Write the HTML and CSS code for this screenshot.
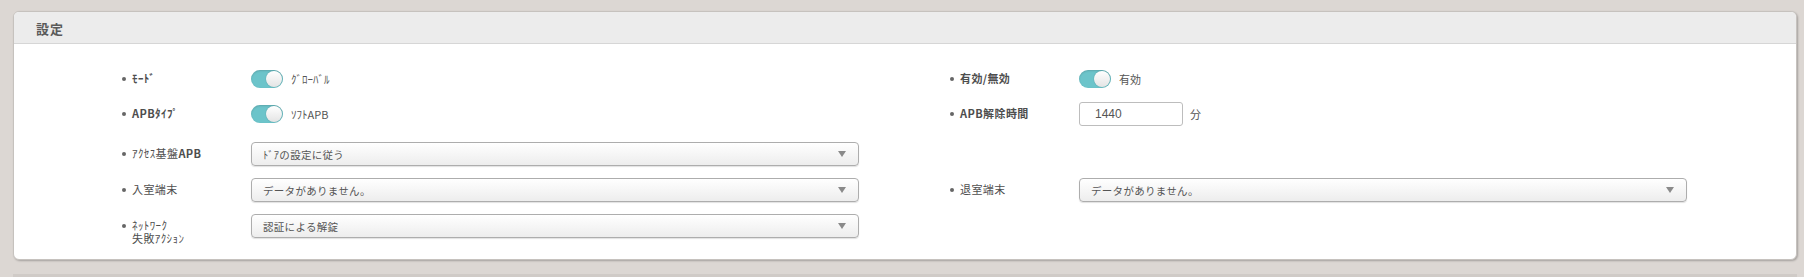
FILE: index.html
```html
<!DOCTYPE html>
<html lang="ja">
<head>
    <meta charset="UTF-8">
    <meta name="viewport" content="width=device-width, initial-scale=1.0">
    <title>設定</title>
    <link rel="stylesheet" href="styles.css">
</head>
<body>
    <div class="panel">
        <div class="panel-header">
            <h3 class="panel-title">設定</h3>
        </div>
        <div class="panel-body">
            <div class="form-row row-first">
                <div class="field">
                    <div class="field-label bold">ﾓｰﾄﾞ</div>
                    <div class="field-value">
                        <span class="toggle on"><span class="knob"></span></span>
                        <span class="toggle-text">ｸﾞﾛｰﾊﾞﾙ</span>
                    </div>
                </div>
                <div class="field">
                    <div class="field-label bold">有効/無効</div>
                    <div class="field-value">
                        <span class="toggle on"><span class="knob"></span></span>
                        <span class="toggle-text">有効</span>
                    </div>
                </div>
            </div>
            <div class="form-row row-second">
                <div class="field">
                    <div class="field-label bold">APBﾀｲﾌﾟ</div>
                    <div class="field-value">
                        <span class="toggle on"><span class="knob"></span></span>
                        <span class="toggle-text">ｿﾌﾄAPB</span>
                    </div>
                </div>
                <div class="field">
                    <div class="field-label bold">APB解除時間</div>
                    <div class="field-value">
                        <input type="text" class="text-input" value="1440">
                        <span class="unit">分</span>
                    </div>
                </div>
            </div>
            <div class="form-row">
                <div class="field">
                    <div class="field-label"><span>ｱｸｾｽ基盤<b>APB</b></span></div>
                    <div class="field-value">
                        <div class="select"><span class="select-text">ﾄﾞｱの設定に従う</span><span class="caret"></span></div>
                    </div>
                </div>
                <div class="field"></div>
            </div>
            <div class="form-row">
                <div class="field">
                    <div class="field-label">入室端末</div>
                    <div class="field-value">
                        <div class="select"><span class="select-text">データがありません。</span><span class="caret"></span></div>
                    </div>
                </div>
                <div class="field">
                    <div class="field-label">退室端末</div>
                    <div class="field-value">
                        <div class="select"><span class="select-text">データがありません。</span><span class="caret"></span></div>
                    </div>
                </div>
            </div>
            <div class="form-row row-last">
                <div class="field">
                    <div class="field-label">ﾈｯﾄﾜｰｸ<br>失敗ｱｸｼｮﾝ</div>
                    <div class="field-value">
                        <div class="select"><span class="select-text">認証による解錠</span><span class="caret"></span></div>
                    </div>
                </div>
                <div class="field"></div>
            </div>
        </div>
    </div>
    <div class="panel-next"></div>
</body>
</html>
```

FILE: styles.css
```css
body {
    margin: 0;
    padding: 11px 7px 0 13px;
    background: #dcd7d3;
    font-family: "Noto Sans CJK JP", "Liberation Sans", sans-serif;
    color: #555;
    overflow: hidden;
}
.panel {
    background: #fff;
    border: 1px solid #c6c2be;
    border-radius: 6px;
    box-shadow: 1px 1px 2px rgba(0, 0, 0, 0.25);
    overflow: hidden;
}
.panel-header {
    height: 31px;
    background: #ececec;
    border-bottom: 1px solid #d6d6d6;
    padding-left: 22px;
}
.panel-title {
    margin: 0;
    font-size: 13px;
    font-weight: bold;
    letter-spacing: 1px;
    line-height: 33px;
    color: #5a5a5a;
}
.panel-body {
    padding: 23px 0 21px 108px;
}
.form-row {
    display: grid;
    grid-template-columns: 828px 1fr;
    height: 24px;
    margin-bottom: 12px;
}
.row-first {
    margin-bottom: 11px;
}
.row-second {
    margin-bottom: 16px;
}
.row-last {
    margin-bottom: 0;
}
.field {
    display: flex;
}
.field-label {
    flex: none;
    width: 129px;
    box-sizing: border-box;
    padding: 5px 0 0 10px;
    position: relative;
    font-size: 11px;
    line-height: 13px;
    letter-spacing: 0.4px;
    color: #4e4e4e;
    white-space: nowrap;
}
.field-label::before {
    content: "";
    position: absolute;
    left: 0;
    top: 10px;
    width: 4px;
    height: 4px;
    border-radius: 50%;
    background: #666;
}
.field-label b,
.field-label.bold {
    font-weight: bold;
}
.field-value {
    display: flex;
    align-items: center;
    height: 24px;
}
.toggle {
    position: relative;
    display: inline-block;
    width: 32px;
    height: 18px;
    border-radius: 9px;
    background: #6cc4ca;
    box-shadow: inset 0 1px 2px rgba(0, 0, 0, 0.15);
}
.toggle .knob {
    position: absolute;
    top: 1px;
    right: 1px;
    width: 16px;
    height: 16px;
    border-radius: 50%;
    background: linear-gradient(to bottom, #ffffff, #e4e4e4);
    box-shadow: 0 0 1px rgba(0, 0, 0, 0.4);
}
.toggle-text {
    margin-left: 8px;
    font-size: 11px;
    color: #555;
}
.text-input {
    box-sizing: border-box;
    width: 104px;
    height: 24px;
    padding: 0 0 0 15px;
    border: 1px solid #bdbdbd;
    border-radius: 3px;
    font-family: "Liberation Sans", sans-serif;
    font-size: 12px;
    color: #555;
    outline: none;
}
.unit {
    margin-left: 7px;
    font-size: 11px;
    color: #555;
}
.select {
    box-sizing: border-box;
    width: 608px;
    height: 24px;
    display: flex;
    align-items: center;
    justify-content: space-between;
    padding: 0 12px 0 11px;
    border: 1px solid #adadad;
    border-radius: 4px;
    background: linear-gradient(to bottom, #ffffff, #ededed);
    box-shadow: 0 1px 1px rgba(0, 0, 0, 0.12);
}
.select-text {
    font-size: 10.5px;
    letter-spacing: 0.3px;
    color: #555;
}
.caret {
    width: 0;
    height: 0;
    border-left: 4.5px solid transparent;
    border-right: 4.5px solid transparent;
    border-top: 6px solid #8a8a8a;
}
.panel-next {
    height: 3px;
    margin-top: 14px;
    background: #d0cbc7;
}
```
